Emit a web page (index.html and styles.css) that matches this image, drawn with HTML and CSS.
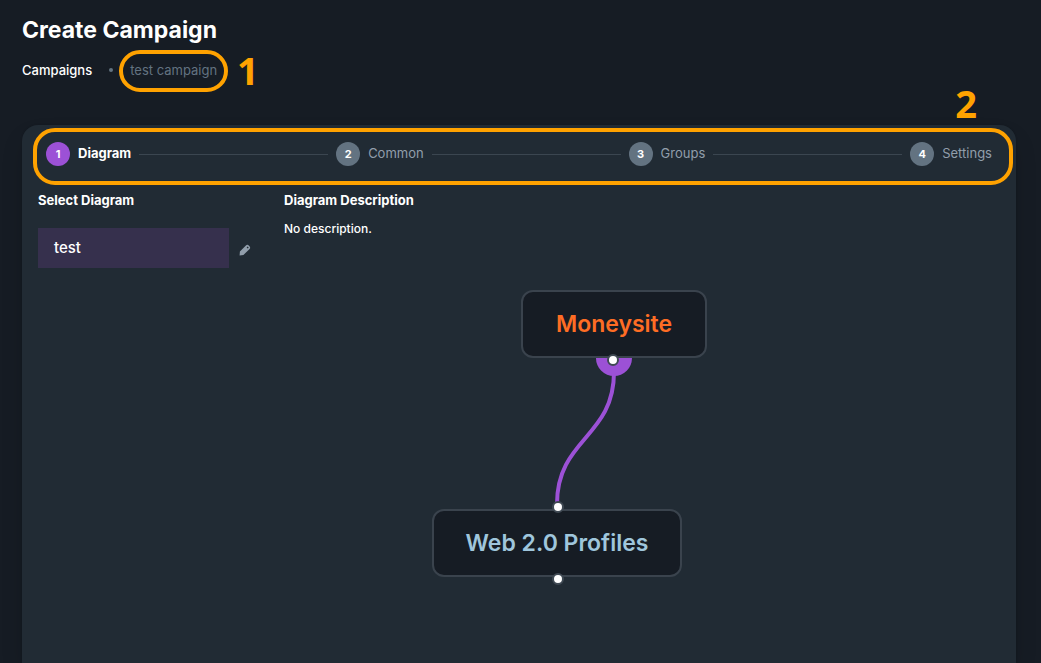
FILE: index.html
```html
<!DOCTYPE html>
<html lang="en">
<head>
<meta charset="utf-8">
<meta name="viewport" content="width=device-width, initial-scale=1">
<title>Create Campaign</title>
<link rel="stylesheet" href="styles.css">
</head>
<body>
<main class="page">
  <header class="page-header">
    <h1 class="page-title">Create Campaign</h1>
    <nav class="breadcrumb" aria-label="Breadcrumb">
      <a class="breadcrumb-link" href="#">Campaigns</a>
      <span class="breadcrumb-dot"></span>
      <span class="breadcrumb-current">test campaign
        <span class="callout callout-name"></span>
        <span class="callout-number number-one">1</span>
      </span>
    </nav>
  </header>

  <section class="card">
    <span class="callout callout-steps"></span>
    <span class="callout-number number-two">2</span>
    <ol class="stepper">
      <li class="step step-active"><span class="step-icon">1</span><span class="step-label">Diagram</span></li>
      <li class="step-line"></li>
      <li class="step"><span class="step-icon">2</span><span class="step-label">Common</span></li>
      <li class="step-line"></li>
      <li class="step"><span class="step-icon">3</span><span class="step-label">Groups</span></li>
      <li class="step-line"></li>
      <li class="step"><span class="step-icon">4</span><span class="step-label">Settings</span></li>
    </ol>

    <div class="content">
      <div class="picker">
        <h2 class="section-title">Select Diagram</h2>
        <div class="picker-row">
          <button class="picker-item" type="button">test</button>
          <button class="edit-button" type="button" aria-label="Edit diagram">
            <svg class="edit-icon" viewBox="0 0 12 12" aria-hidden="true">
              <path fill="#919eab" fill-rule="evenodd" d="M.6 11.4 .9 7.6 6.9 1.5Q8 .3 9.2 1.1L10.9 2.8Q11.7 4 10.6 5.1L4.4 11.1ZM8.6 2.4 7.6 3.4 8.7 4.5 9.7 3.5Z"/>
            </svg>
          </button>
        </div>
      </div>
      <div class="details">
        <h2 class="section-title">Diagram Description</h2>
        <p class="description">No description.</p>
        <div class="canvas">
          <svg class="edges" width="500" height="360" aria-hidden="true">
            <path d="M312 118A18 18 0 0 0 348 118Z" fill="#9c51d6"/>
            <path d="M330 132C330 198 273 198 273 264" fill="none" stroke="#9c51d6" stroke-width="4"/>
          </svg>
          <div class="node node-money">Moneysite</div>
          <div class="node node-web">Web 2.0 Profiles</div>
          <span class="handle handle-money-out"></span>
          <span class="handle handle-web-in"></span>
          <span class="handle handle-web-out"></span>
        </div>
      </div>
    </div>
  </section>
</main>
</body>
</html>
```
FILE: styles.css
```css
* { box-sizing: border-box; }

body {
  margin: 0;
  background: #161c24;
  color: #fff;
  font-family: Inter, "Liberation Sans", sans-serif;
  font-size: 14px;
  line-height: 22px;
}

.page {
  display: flex;
  flex-direction: column;
  min-height: 100vh;
  padding: 12px 25px 0 22px;
}

.page-header { margin-bottom: 44px; }

.page-title {
  margin: 0 0 11px;
  font-size: 23px;
  font-weight: 700;
  line-height: 36px;
}

.breadcrumb {
  display: flex;
  align-items: center;
  gap: 17px;
  font-size: 13px;
}

.breadcrumb-link {
  color: #fff;
  font-weight: 500;
  text-decoration: none;
}

.breadcrumb-dot {
  width: 4px;
  height: 4px;
  border-radius: 50%;
  background: #637381;
}

.breadcrumb-current {
  position: relative;
  color: #637381;
}

.callout {
  position: absolute;
  border: 4px solid #ffa200;
  pointer-events: none;
}

.callout-name {
  inset: -9px -11px -11px;
  border-radius: 21px;
}

.callout-steps {
  inset: 3px 3px auto 11px;
  height: 57px;
  border-radius: 22px;
}

.callout-number {
  position: absolute;
  color: #ffa200;
  font-family: "Open Sans", sans-serif;
  font-size: 38px;
  font-weight: 700;
  line-height: 40px;
}

.number-one {
  top: -9px;
  left: 100%;
  margin-left: 20px;
}

.number-two {
  top: -42px;
  right: 39px;
}

.card {
  position: relative;
  flex: 1;
  padding: 17px 16px;
  border-radius: 16px 16px 0 0;
  background: #212b34;
  box-shadow: 0 0 2px rgba(0, 0, 0, 0.2), 0 12px 24px -4px rgba(0, 0, 0, 0.2);
}

.stepper {
  display: flex;
  align-items: center;
  gap: 8px;
  margin: 0 0 23px;
  padding: 0 8px;
  list-style: none;
}

.step {
  display: flex;
  align-items: flex-start;
  gap: 8px;
  color: #919eab;
}

.step-icon {
  width: 24px;
  height: 24px;
  border-radius: 50%;
  background: #637381;
  color: #fff;
  font-size: 11px;
  font-weight: 700;
  line-height: 24px;
  text-align: center;
}

.step-active { color: #fff; }
.step-active .step-icon { background: #9c51d6; }
.step-active .step-label { font-weight: 700; }
.step-label { font-size: 13px; }

.step-line {
  flex: 1;
  height: 1px;
  background: #3b4650;
}

.content {
  display: grid;
  grid-template-columns: 222px 1fr;
  gap: 24px;
}

.section-title {
  margin: 0;
  font-size: 13px;
  font-weight: 700;
  line-height: 22px;
}

.picker-row {
  display: flex;
  align-items: center;
  gap: 10px;
  margin-top: 17px;
}

.picker-item {
  width: 191px;
  height: 40px;
  padding: 0 16px;
  border: 0;
  background: #36304d;
  color: #fff;
  font: 500 15px/24px Inter, "Liberation Sans", sans-serif;
  text-align: left;
}

.edit-button {
  display: flex;
  margin-top: 4px;
  padding: 0;
  border: 0;
  background: none;
}

.edit-icon {
  width: 12px;
  height: 12px;
}

.description {
  margin: 9px 0 0;
  font-size: 12px;
  font-weight: 500;
  line-height: 18px;
}

.canvas {
  position: relative;
  height: 360px;
  margin-top: 2px;
}

.edges {
  position: absolute;
  top: 0;
  left: 0;
}

.node {
  position: absolute;
  height: 68px;
  border: 2px solid #3a434d;
  border-radius: 12px;
  background: #161c24;
  font-size: 23px;
  font-weight: 600;
  line-height: 64px;
  text-align: center;
  white-space: nowrap;
}

.node-money {
  top: 50px;
  left: 237px;
  width: 186px;
  color: #fe6d24;
}

.node-web {
  top: 269px;
  left: 148px;
  width: 250px;
  color: #9fc6dc;
}

.handle {
  position: absolute;
  width: 12px;
  height: 12px;
  border: 2px solid #3f4953;
  border-radius: 50%;
  background: #fff;
}

.handle-money-out { top: 114px; left: 323px; }
.handle-web-in { top: 261px; left: 268px; }
.handle-web-out { top: 333px; left: 268px; }
```
